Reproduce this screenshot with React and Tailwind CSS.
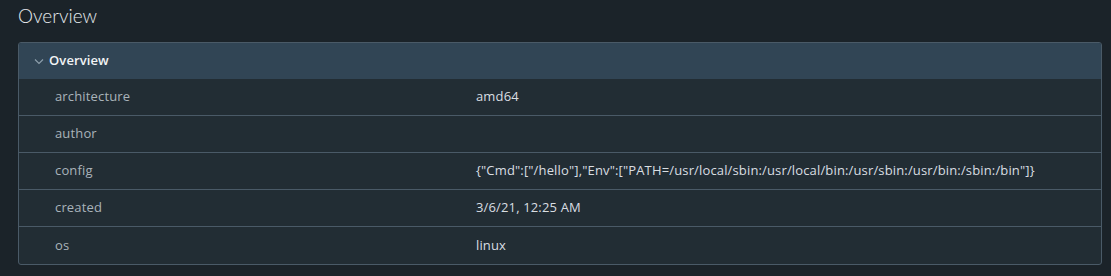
import React from "react";

const rows = [
  ["architecture", "amd64"],
  ["author", ""],
  ["config", '{"Cmd":["/hello"],"Env":["PATH=/usr/local/sbin:/usr/local/bin:/usr/sbin:/usr/bin:/sbin:/bin"]}'],
  ["created", "3/6/21, 12:25 AM"],
  ["os", "linux"],
];

export default function App() {
  return (
    <div className="w-[1111px] h-[276px] bg-[#1b2329] overflow-hidden" style={{ fontFamily: "'Open Sans', Lato, sans-serif" }}>
      <div className="pl-[18px] pt-[2px] h-[42px]">
        <h1 className="text-[19px] leading-[28px] font-light text-[#e6eaed]" style={{ fontFamily: "Lato, sans-serif" }}>Overview</h1>
      </div>
      <div className="ml-[18px] w-[1084px] border border-[#4a5a67] rounded-[3px] bg-[#222d34] overflow-hidden">
        <div className="h-[36px] bg-[#314555] flex items-center pl-[14px]">
          <svg width="12" height="12" viewBox="0 0 12 12" className="mr-[4px]">
            <path d="M2 4.5 L6 8.5 L10 4.5" fill="none" stroke="#8fa0ad" strokeWidth="1.1" />
          </svg>
          <span className="text-[13px] font-semibold text-[#f2f4f5] tracking-[0.1px]">Overview</span>
        </div>
        {rows.map(([k, v], i) => (
          <div key={k} className={`flex h-[37px] items-center text-[13px] tracking-[0.15px] ${i < rows.length - 1 ? "border-b border-[#4a5a67]" : ""}`}>
            <div className="w-[457px] pl-[36px] text-[#a9b3ba]">{k}</div>
            <div className="text-[#d9dee2] whitespace-nowrap">{v}</div>
          </div>
        ))}
      </div>
    </div>
  );
}
